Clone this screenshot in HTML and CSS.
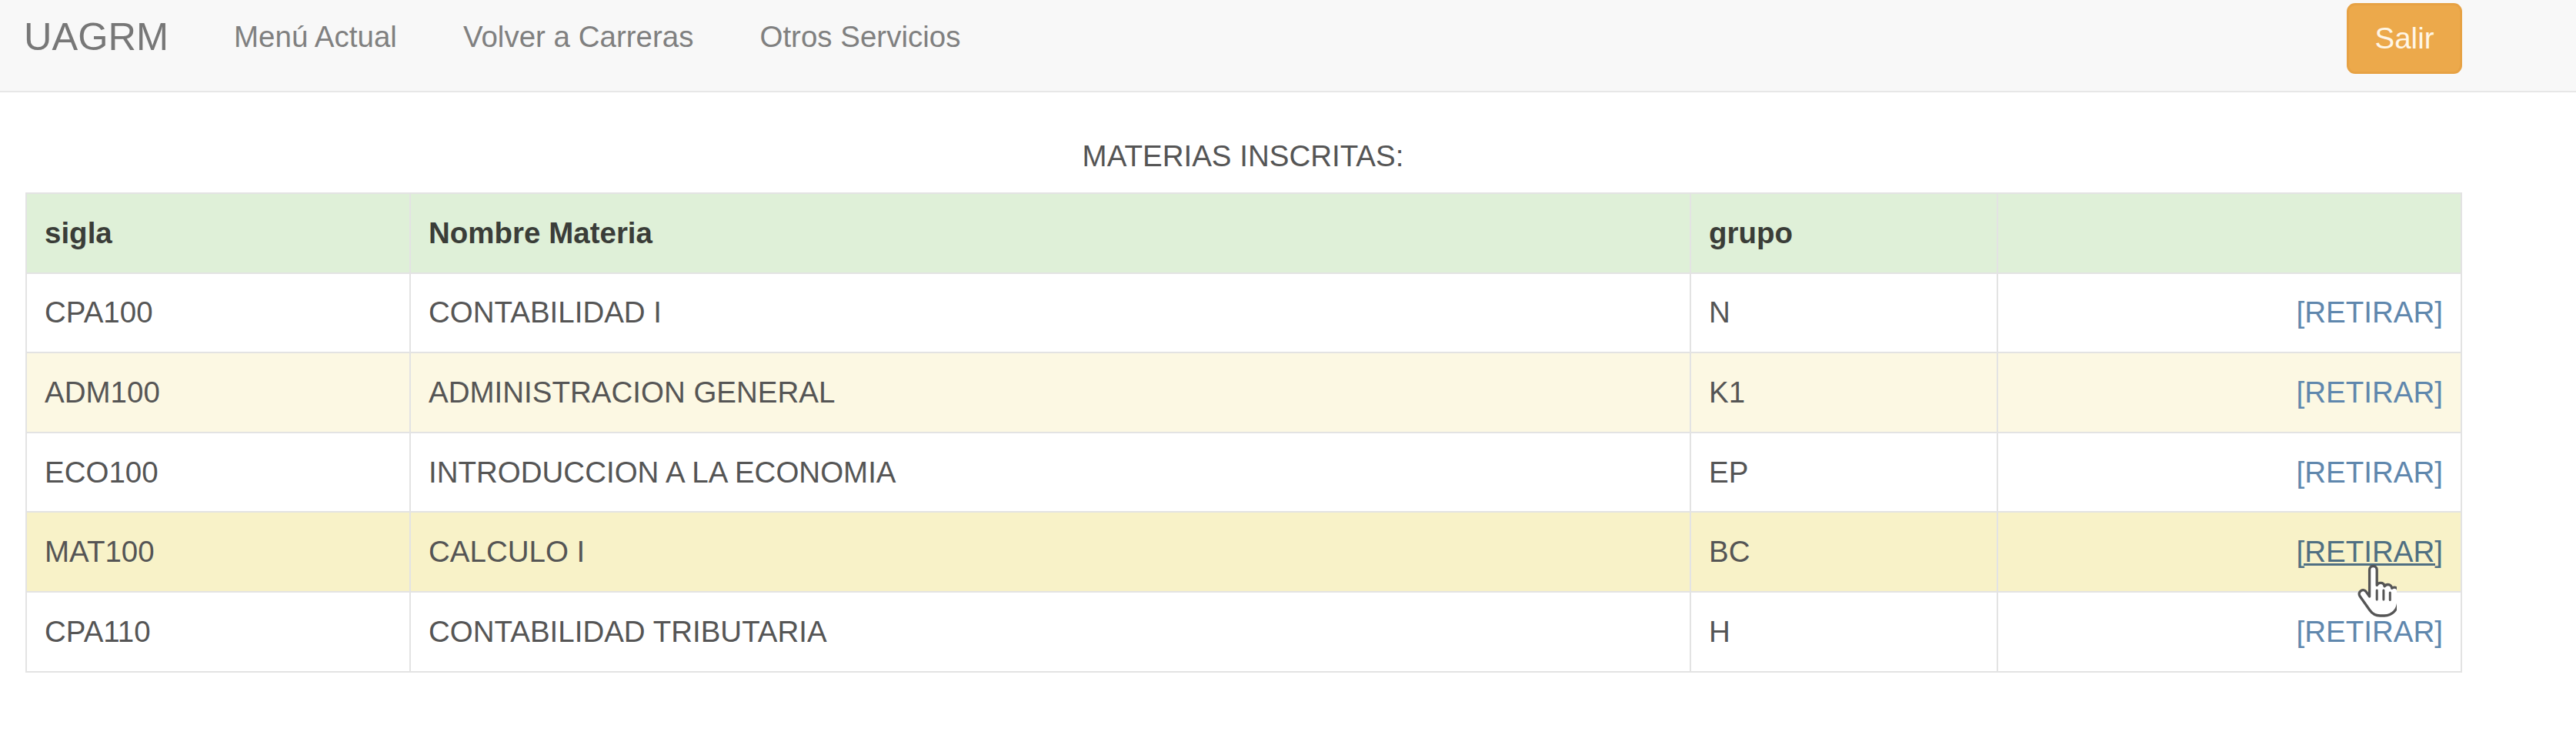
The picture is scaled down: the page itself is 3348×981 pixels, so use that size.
FILE: index.html
```
<!DOCTYPE html>
<html lang="es">
<head>
<meta charset="utf-8">
<title>UAGRM - Materias Inscritas</title>
<link rel="stylesheet" href="styles.css">
</head>
<body>
<nav class="navbar">
  <a class="brand" href="#">UAGRM</a>
  <ul class="nav-links">
    <li><a href="#">Menú Actual</a></li>
    <li><a href="#">Volver a Carreras</a></li>
    <li><a href="#">Otros Servicios</a></li>
  </ul>
  <button class="btn-salir" type="button">Salir</button>
</nav>
<main class="content">
  <p class="title">MATERIAS INSCRITAS:</p>
  <div class="table-wrap">
    <table class="materias">
      <colgroup>
        <col class="c-sigla">
        <col class="c-nombre">
        <col class="c-grupo">
        <col class="c-accion">
      </colgroup>
      <thead>
        <tr class="head">
          <th>sigla</th>
          <th>Nombre Materia</th>
          <th>grupo</th>
          <th></th>
        </tr>
      </thead>
      <tbody>
        <tr>
          <td>CPA100</td><td>CONTABILIDAD I</td><td>N</td><td class="accion"><a href="#">[RETIRAR]</a></td>
        </tr>
        <tr class="warning">
          <td>ADM100</td><td>ADMINISTRACION GENERAL</td><td>K1</td><td class="accion"><a href="#">[RETIRAR]</a></td>
        </tr>
        <tr>
          <td>ECO100</td><td>INTRODUCCION A LA ECONOMIA</td><td>EP</td><td class="accion"><a href="#">[RETIRAR]</a></td>
        </tr>
        <tr class="warning hovered">
          <td>MAT100</td><td>CALCULO I</td><td>BC</td><td class="accion"><a class="hover-link" href="#">[RETIRAR]</a></td>
        </tr>
        <tr>
          <td>CPA110</td><td>CONTABILIDAD TRIBUTARIA</td><td>H</td><td class="accion"><a href="#">[RETIRAR]</a></td>
        </tr>
      </tbody>
    </table>
    <svg class="cursor" viewBox="0 0 18 23" width="54" height="69" aria-hidden="true">
      <path d="M6.2 2.2c0-1 .7-1.7 1.6-1.7s1.6.7 1.6 1.7v6.6c.3-.6.9-1 1.6-1 .9 0 1.6.6 1.7 1.5.3-.5.9-.8 1.5-.8.9 0 1.6.7 1.7 1.6.3-.3.7-.4 1.1-.4.9 0 1.6.8 1.6 1.7v4.2c0 3.6-2.4 6.4-6 6.4h-1.8c-2 0-3.4-.8-4.5-2.4l-4.3-6.1c-.5-.8-.3-1.8.5-2.3.8-.5 1.8-.3 2.3.5l1.4 2V2.2z" fill="#fff" stroke="#555" stroke-width="1.1" stroke-linejoin="round"/>
      <path d="M9.4 11v4M12.3 11v4M15.1 12v3.2" stroke="#555" stroke-width="1" stroke-linecap="round" fill="none"/>
    </svg>
  </div>
</main>
</body>
</html>
```
FILE: styles.css
```
html, body {
  margin: 0;
  padding: 0;
  background: #ffffff;
}

body {
  font-family: "Liberation Sans", Arial, Helvetica, sans-serif;
  color: #555555;
}

.navbar {
  box-sizing: border-box;
  height: 120px;
  background: #f8f8f8;
  border-bottom: 2px solid #e7e7e7;
  display: flex;
  align-items: center;
  padding: 0 148px 22px 31px;
}

.brand {
  font-size: 50.5px;
  line-height: 1.15;
  color: #777777;
  text-decoration: none;
  padding-right: 42px;
}

.nav-links {
  display: flex;
  list-style: none;
  margin: 0;
  padding: 0;
}

.nav-links a {
  display: block;
  font-size: 38.5px;
  line-height: 1.15;
  color: #808080;
  text-decoration: none;
  padding: 0 43px;
}

.btn-salir {
  margin-left: auto;
  box-sizing: border-box;
  width: 150px;
  height: 92px;
  background: #eca94b;
  border: 3px solid #e7a244;
  border-radius: 11px;
  color: #fff6e6;
  font-family: "Liberation Sans", Arial, Helvetica, sans-serif;
  font-size: 38.5px;
  padding: 0;
  margin-top: 4px;
}

.content {
  padding: 61px 150px 0 33px;
}

.title {
  margin: 0 0 25px;
  width: 3165px;
  text-align: center;
  font-size: 38.5px;
  line-height: 44px;
  color: #555555;
}

.table-wrap {
  position: relative;
  width: 3165px;
}

.materias {
  width: 3165px;
  border-collapse: collapse;
  table-layout: fixed;
  font-size: 38.5px;
}

.c-sigla { width: 499px; }
.c-nombre { width: 1664px; }
.c-grupo { width: 399px; }
.c-accion { width: 603px; }

.materias th,
.materias td {
  border: 2px solid #e3e3e3;
  padding: 0 23px;
  height: 101.6px;
  text-align: left;
  vertical-align: middle;
  line-height: 44px;
  white-space: nowrap;
}

.materias th {
  font-weight: bold;
  color: #3a3d38;
}

.materias td {
  color: #555555;
}

.head th {
  background: #dff0d8;
}

.warning td {
  background: #fcf8e3;
}

.hovered td {
  background: #f8f2c8;
}

.materias td.accion {
  text-align: right;
}

.accion a {
  color: #5f87ad;
  text-decoration: none;
}

.accion a.hover-link {
  color: #4f6f82;
  text-decoration: underline;
}

.cursor {
  position: absolute;
  left: 3028px;
  top: 484px;
  pointer-events: none;
}
```
